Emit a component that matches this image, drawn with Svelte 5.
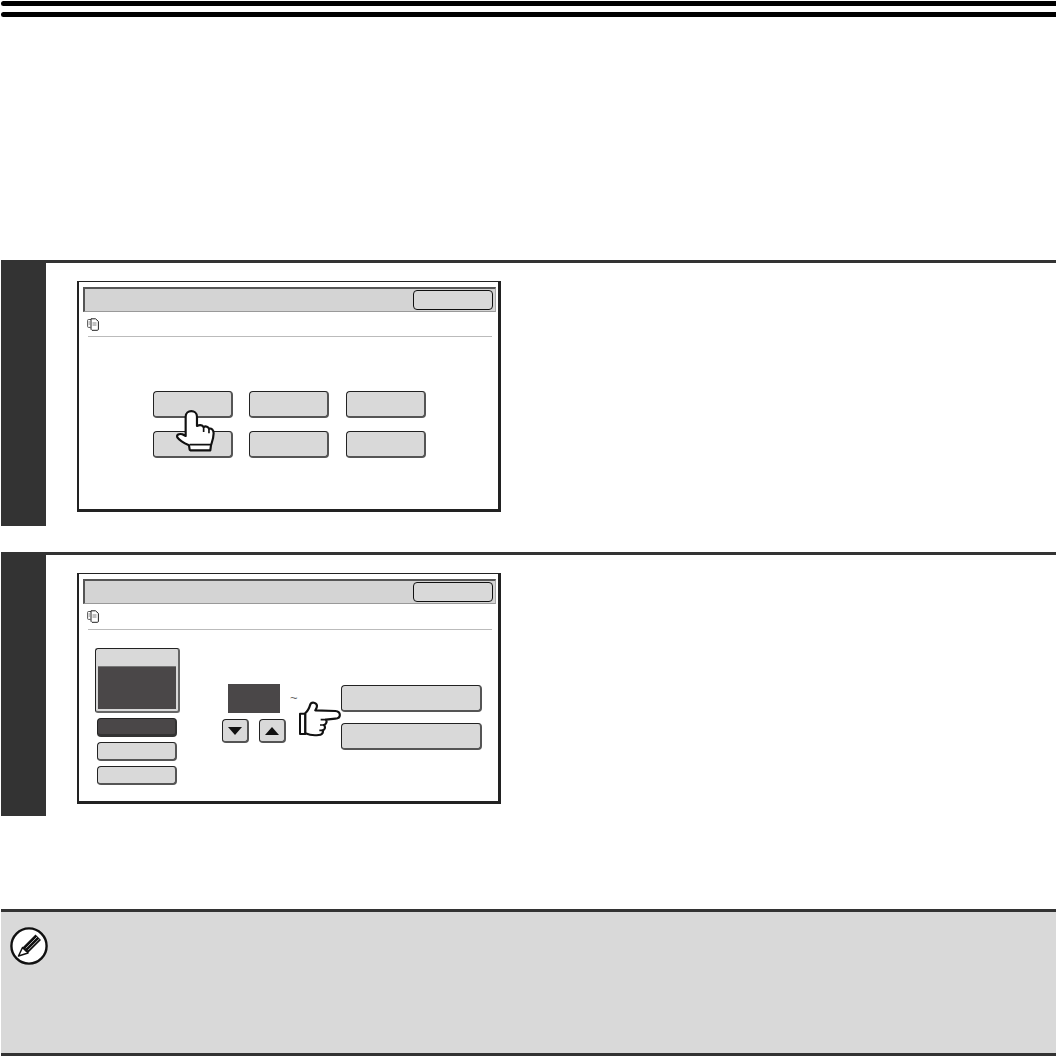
<script>
  const choices = [1, 2, 3, 4, 5, 6];
  const modes = ['dark', '', ''];
</script>

{#snippet screenHead()}
  <div class="titlebar">
    <div class="btn ok"></div>
  </div>
  <div class="mode">
    <svg class="copy-icon" viewBox="0 0 12 13" width="12" height="13">
      <path d="M4.5 1.5H1.5Q.6 1.5.6 2.4V8.5Q.6 9.4 1.5 9.4H3.5" fill="none" stroke="#444" stroke-width=".9" />
      <path d="M4 .8H8.5L11.4 3.4V11.2Q11.4 12.3 10.4 12.3H5L4 11.3Z" fill="#fff" stroke="#222" stroke-width="1" />
      <path d="M5.5 5H9.5M5.5 7H9.5M1.6 4H3M1.6 6H3" stroke="#666" stroke-width=".8" />
    </svg>
  </div>
  <div class="divider"></div>
{/snippet}

<div class="page">
  <div class="rule first"></div>
  <div class="rule second"></div>

  <section class="step one">
    <div class="side"></div>
    <div class="screen">
      {@render screenHead()}
      <div class="choices">
        {#each choices as c (c)}
          <div class="btn choice"></div>
        {/each}
      </div>
      <svg class="hand up" viewBox="100 70 130 135" width="43.3" height="45">
        <path d="M150 195 L148 182 C135 176 120 168 113 158 C110 150 118 146 128 149 L138 154 V96 C138 74 172 74 172 96 V124 C180 120 188 122 192 127 C199 123 206 127 208 132 C216 130 222 136 222 146 C222 160 218 170 214 182 L212 197 H152 Z" fill="#fff" stroke="#111" stroke-width="6.5" stroke-linejoin="round" />
        <path d="M192 127V142M208 132V146M150 180H214" fill="none" stroke="#111" stroke-width="5" />
      </svg>
    </div>
  </section>

  <section class="step two">
    <div class="side"></div>
    <div class="screen">
      {@render screenHead()}
      <div class="settings">
        <div class="left-col">
          <div class="paper-box">
            <div class="paper-fill"></div>
          </div>
          {#each modes as m, i (i)}
            <div class="btn mode-btn {m}"></div>
          {/each}
        </div>
        <div class="mid-col">
          <div class="readout">
            <div class="value"></div>
            <span class="tilde">~</span>
          </div>
          <div class="arrows">
            <div class="btn arrow"><span class="tri down"></span></div>
            <div class="btn arrow"><span class="tri up"></span></div>
          </div>
        </div>
        <div class="right-col">
          <div class="btn wide"></div>
          <div class="btn wide"></div>
        </div>
      </div>
      <svg class="hand point" viewBox="245 75 135 110" width="45" height="36.7">
        <path d="M254 116H270L270 177H254Z" fill="#fff" stroke="#111" stroke-width="6" stroke-linejoin="round" />
        <path d="M270 114 C278 108 282 98 285 88 C289 80 303 82 305 92 C305 98 302 102 300 106 L360 108 C378 110 378 130 360 131 L332 134 C336 140 332 148 326 150 C331 156 329 164 322 166 C325 174 318 180 310 180 C296 182 282 180 270 175 Z" fill="#fff" stroke="#111" stroke-width="6.5" stroke-linejoin="round" />
        <path d="M332 134H316M326 150H314M322 166H312" fill="none" stroke="#111" stroke-width="5" />
      </svg>
    </div>
  </section>

  <section class="note">
    <svg class="pencil" viewBox="0 0 38 38" width="38" height="38">
      <circle cx="19" cy="19" r="17.6" fill="#fff" stroke="#111" stroke-width="2.4" />
      <path d="M25.5 7.5L31 13L18 26L12.5 20.5Z" fill="#111" />
      <path d="M12.5 20.5L18 26L8.5 29Z" fill="#fff" stroke="#111" stroke-width="1.5" stroke-linejoin="round" />
      <path d="M15.8 21.3L27 10M18 23.2L29 12.2" stroke="#d9d9d9" stroke-width=".8" />
    </svg>
  </section>
</div>

<style>
  :global(body) {
    background: #fff;
    font-family: "Liberation Sans", Arial, sans-serif;
  }

  .page {
    height: 1056px;
    overflow: hidden;
    display: flex;
    flex-direction: column;
    padding-top: 1px;
    padding-left: 1px;
    box-sizing: border-box;
  }

  .rule {
    height: 5px;
    background: #000;
    border-radius: 3px 0 0 3px;
    flex: none;
  }
  .rule.second {
    margin-top: 6px;
  }

  .step {
    display: flex;
    flex: none;
    box-sizing: border-box;
    border-top: 3px solid #333;
  }
  .step.one {
    height: 266px;
    margin-top: 243px;
  }
  .step.two {
    height: 264px;
    margin-top: 26px;
  }

  .side {
    width: 45px;
    background: #333;
    flex: none;
  }

  .screen {
    position: relative;
    box-sizing: border-box;
    width: 424px;
    height: 231px;
    margin: 18px 0 0 31px;
    padding: 5px 4px 0 4px;
    background: #fff;
    border-style: solid;
    border-color: #222;
    border-width: 1px 3px 3px 2px;
  }

  .titlebar {
    box-sizing: border-box;
    height: 25px;
    width: 413px;
    display: flex;
    justify-content: flex-end;
    padding: 1px 2px 0 0;
    background: #d4d4d4;
    border-style: solid;
    border-color: #555 #aaa #999 #555;
    border-width: 2px 1px 1px 2px;
  }

  .btn {
    box-sizing: border-box;
    background: #d9d9d9;
    border-style: solid;
    border-color: #222 #555 #555 #222;
    border-width: 1px 2px 2px 1px;
    border-radius: 4px;
    flex: none;
  }

  .ok {
    width: 80px;
    height: 20px;
    border-color: #111;
    border-width: 1px 1.5px 1.5px 1px;
    border-radius: 4px;
  }

  .mode {
    height: 13px;
    margin: 6px 0 0 4px;
  }
  .copy-icon {
    display: block;
  }

  .divider {
    height: 1px;
    width: 404px;
    margin: 6px 0 0 5px;
    background: #bbb;
  }
  .one .divider {
    margin-top: 5px;
  }

  .choices {
    display: grid;
    grid-template-columns: repeat(3, 80px);
    grid-auto-rows: 27px;
    column-gap: 16.5px;
    row-gap: 13px;
    margin: 54px 0 0 69.75px;
    width: max-content;
  }

  .hand {
    position: absolute;
  }
  .hand.up {
    left: 94px;
    top: 126px;
  }
  .hand.point {
    left: 218px;
    top: 126px;
  }

  .settings {
    display: flex;
    padding: 18px 0 0 12px;
  }

  .left-col {
    width: 85px;
    display: flex;
    flex-direction: column;
    flex: none;
  }

  .paper-box {
    box-sizing: border-box;
    width: 85px;
    height: 65px;
    padding: 17px 2px 2px 2px;
    background: #d9d9d9;
    border-style: solid;
    border-color: #222 #666 #666 #222;
    border-width: 1px 2px 2px 1px;
    border-radius: 3px;
    margin-bottom: 5px;
  }
  .paper-fill {
    height: 43px;
    background: #4a4748;
    border-top: 1px solid #777;
    box-sizing: border-box;
  }

  .mode-btn {
    width: 80px;
    height: 19px;
    margin: 0 0 5px 2px;
  }
  .mode-btn.dark {
    background: #4a4748;
    border-color: #222 #333 #333 #222;
    border-width: 1px 2px 3px 1px;
  }

  .mid-col {
    width: 119px;
    padding: 36px 0 0 42px;
    box-sizing: border-box;
    flex: none;
  }

  .readout {
    display: flex;
    margin-left: 6px;
    height: 29px;
  }
  .value {
    width: 52px;
    height: 29px;
    background: #4a4748;
  }
  .tilde {
    font-size: 13px;
    line-height: 13px;
    color: #666;
    margin: 7px 0 0 10px;
  }

  .arrows {
    display: flex;
    gap: 10px;
    margin-top: 6px;
  }
  .arrow {
    width: 27px;
    height: 24px;
    display: flex;
    align-items: center;
    justify-content: center;
  }

  .tri {
    width: 0;
    height: 0;
    border-left: 7.5px solid transparent;
    border-right: 7.5px solid transparent;
  }
  .tri.down {
    border-top: 8px solid #111;
  }
  .tri.up {
    border-bottom: 8px solid #111;
  }

  .right-col {
    display: flex;
    flex-direction: column;
    gap: 11px;
    padding: 37px 0 0 42px;
  }
  .wide {
    width: 141px;
    height: 27px;
  }

  .note {
    box-sizing: border-box;
    height: 147px;
    margin-top: 93px;
    flex: none;
    padding: 15px 0 0 9px;
    background: #d9d9d9;
    border-top: 3px solid #333;
    border-bottom: 3px solid #333;
  }
  .pencil {
    display: block;
  }
</style>
